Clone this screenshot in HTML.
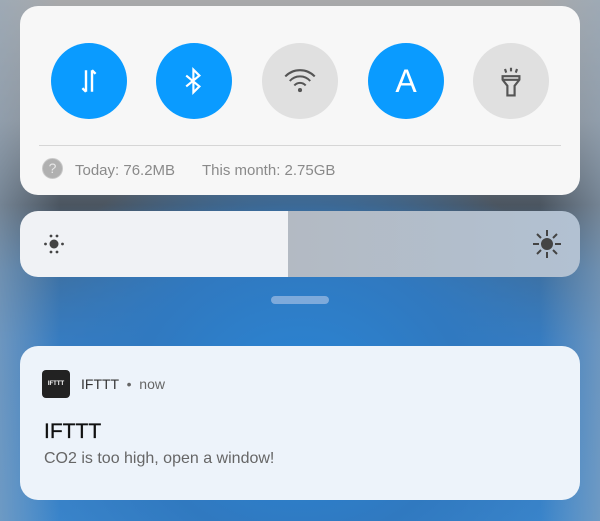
<!DOCTYPE html>
<html><head><style>
body{margin:0;width:600px;height:521px;overflow:hidden;font-family:"Liberation Sans",sans-serif;
background:radial-gradient(ellipse 300px 260px at 300px 400px,#2a86d6 0%,#3079c0 55%,rgba(90,130,170,0) 100%),linear-gradient(180deg,#a8a9aa 0px,#8a8f95 120px,#4b5560 205px,#3f6f9e 270px,#3a7dc0 340px,#3b86cc 521px);position:relative}
.edge{position:absolute;inset:0;background:linear-gradient(90deg,rgba(150,170,190,.55) 0,rgba(150,170,190,0) 60px,rgba(150,170,190,0) 540px,rgba(150,170,190,.55) 600px)}
.card{position:absolute;left:20px;width:560px;border-radius:18px}
.c1{top:6px;height:189px;background:#f7f7f7}
.circ{position:absolute;top:37px;width:76px;height:76px;border-radius:50%;display:flex;align-items:center;justify-content:center}
.b{background:#0a9bff}.g{background:#e0e0e0}
.div{position:absolute;left:19px;right:19px;top:139px;height:1px;background:#d6d6d6}
.txt{position:absolute;top:156px;font-size:15px;color:#8a8a8a}
.c2{top:211px;height:66px;background:linear-gradient(90deg,#f0f2f5 0,#f0f2f5 268px,#b3bac3 268px,#b2c1d2 560px);overflow:hidden}
.handle{position:absolute;left:271px;top:296px;width:58px;height:8px;border-radius:4px;background:#7eaadb}
.c3{top:346px;height:154px;background:#edf3fa}
</style></head><body><div class="edge"></div>
<div class="card c1">
<div class="circ b" style="left:31px"><svg width="36" height="36" viewBox="0 0 30 30" fill="none" stroke="#fff" stroke-width="2"><path d="M12.5 6v18M9.5 21l3 3M17.5 24V6M17.5 6l3 3"/></svg></div>
<div class="circ b" style="left:136px"><svg width="36" height="36" viewBox="0 0 30 30" fill="none" stroke="#fff" stroke-width="1.8"><path d="M8.5 10.5l11 9-5 5V5.5l5 5-11 9"/></svg></div>
<div class="circ g" style="left:242px"><svg width="34" height="34" viewBox="0 0 30 30" fill="none" stroke="#555" stroke-width="1.8"><path d="M2 11a18 18 0 0 1 26 0M6 15a12 12 0 0 1 18 0M10 19a6.5 6.5 0 0 1 10 0"/><circle cx="15" cy="23" r="1.8" fill="#555" stroke="none"/></svg></div>
<div class="circ b" style="left:348px"><span style="color:#fff;font-size:32px">A</span></div>
<div class="circ g" style="left:453px"><svg width="36" height="36" viewBox="0 0 30 30" fill="none" stroke="#555" stroke-width="1.8"><path d="M8 11h14v3l-4 5v8h-6v-8l-4-5z M8 14h14 M10 5l1 3M15 4v3M20 5l-1 3"/></svg></div>
<div class="div"></div>
<div style="position:absolute;left:22px;top:152px;width:21px;height:21px;border-radius:50%;background:#b0b0b0;border:1px solid #c8c8c8;box-sizing:border-box;color:#e8e8e8;font-size:14px;text-align:center;line-height:19px">?</div>
<div class="txt" style="left:55px">Today: 76.2MB</div>
<div class="txt" style="left:182px">This month: 2.75GB</div>
</div>
<div class="card c2">
<svg style="position:absolute;left:22px;top:21px" width="24" height="24" viewBox="0 0 24 24" fill="#444"><circle cx="12" cy="12" r="4.5"/><circle cx="9" cy="4" r="1.4"/><circle cx="15" cy="4" r="1.4"/><circle cx="3.5" cy="12" r="1.4"/><circle cx="20.5" cy="12" r="1.4"/><circle cx="9" cy="20" r="1.4"/><circle cx="15" cy="20" r="1.4"/></svg>
<svg style="position:absolute;left:512px;top:18px" width="30" height="30" viewBox="0 0 30 30" stroke="#444" stroke-width="2" fill="#444"><circle cx="15" cy="15" r="5"/><path d="M15 1v6M15 23v6M1 15h6M23 15h6M5 5l4 4M21 21l4 4M25 5l-4 4M9 21l-4 4"/></svg>
</div>
<div class="handle"></div>
<div class="card c3">
<div style="position:absolute;left:22px;top:24px;width:28px;height:28px;border-radius:4px;background:#222;color:#fff;font-size:6px;font-weight:bold;text-align:center;line-height:28px">IFTTT</div>
<div style="position:absolute;left:61px;top:30px;font-size:14px;color:#333">IFTTT <span style="color:#666">&nbsp;•&nbsp; now</span></div>
<div style="position:absolute;left:24px;top:74px;font-size:21px;color:#111;-webkit-text-stroke:0.3px #111">IFTTT</div>
<div style="position:absolute;left:24px;top:104px;font-size:16px;color:#666">CO2 is too high, open a window!</div>
</div>
</body></html>
